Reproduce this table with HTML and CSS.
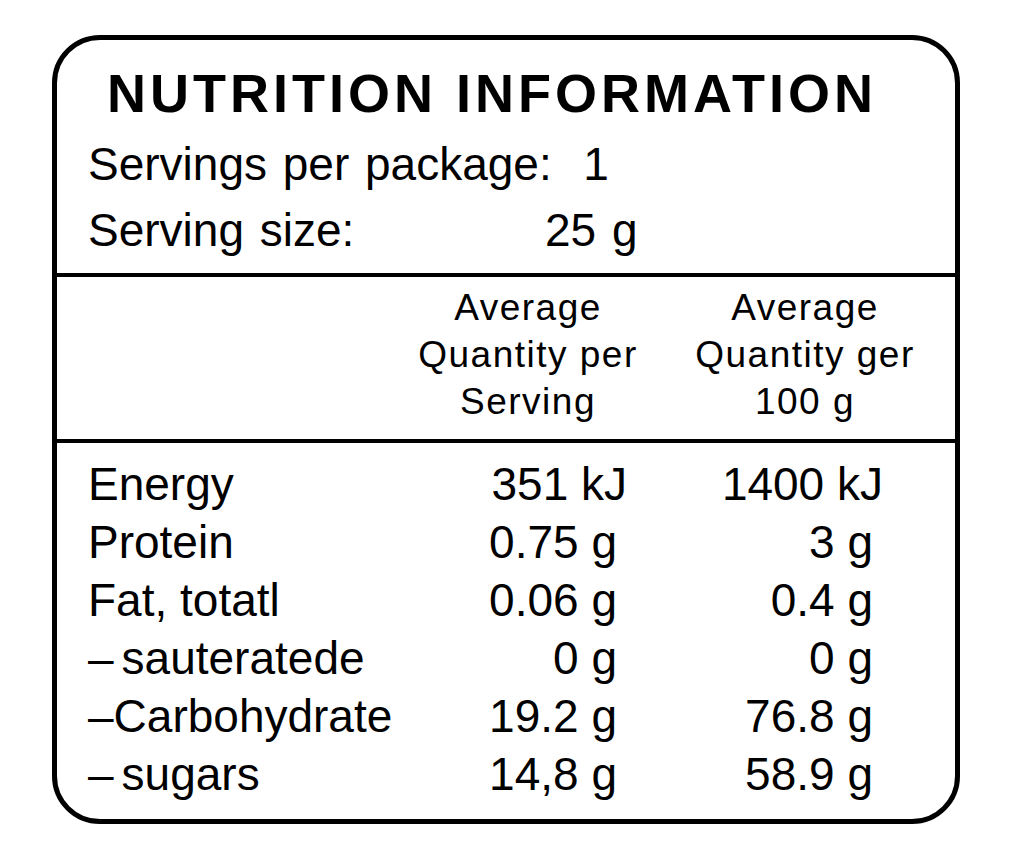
FILE: index.html
```html
<!DOCTYPE html>
<html lang="en">
<head>
<meta charset="utf-8">
<title>Nutrition Information</title>
<link rel="stylesheet" href="styles.css">
</head>
<body>
<div class="panel">
  <section class="intro">
    <h1 class="title">NUTRITION INFORMATION</h1>
    <div class="line">Servings per package:&nbsp; 1</div>
    <div class="line"><span class="size-label">Serving size:</span>25 g</div>
  </section>
  <section class="head">
    <div class="head-empty"></div>
    <div class="head-cell">Average<br>Quantity per<br>Serving</div>
    <div class="head-cell">Average<br>Quantity ger<br>100 g</div>
  </section>
  <section class="body">
    <div class="row"><span class="name">Energy</span><span class="val">351 kJ</span><span class="val">1400 kJ</span></div>
    <div class="row"><span class="name">Protein</span><span class="val g">0.75 g</span><span class="val g">3 g</span></div>
    <div class="row"><span class="name">Fat, totatl</span><span class="val g">0.06 g</span><span class="val g">0.4 g</span></div>
    <div class="row"><span class="name"><span class="dash">&ndash;</span>sauteratede</span><span class="val g">0 g</span><span class="val g">0 g</span></div>
    <div class="row"><span class="name"><span class="dash tight">&ndash;</span>Carbohydrate</span><span class="val g">19.2 g</span><span class="val g">76.8 g</span></div>
    <div class="row"><span class="name"><span class="dash">&ndash;</span>sugars</span><span class="val g">14,8 g</span><span class="val g">58.9 g</span></div>
  </section>
</div>
</body>
</html>
```
FILE: styles.css
```css
html, body {
  margin: 0;
  padding: 0;
  background: #ffffff;
}

body {
  font-family: "Liberation Sans", Arial, sans-serif;
  color: #000000;
}

.panel {
  box-sizing: border-box;
  width: 908px;
  height: 789px;
  margin: 35px 0 0 52px;
  border: 5px solid #000;
  border-radius: 48px;
  display: flex;
  flex-direction: column;
}

.intro {
  padding: 23px 0 10px 31px;
  border-bottom: 4px solid #000;
}

.title {
  margin: 0 0 8px 19px;
  font-size: 54px;
  line-height: 60px;
  font-weight: 700;
  letter-spacing: 4px;
}

.line {
  font-size: 46px;
  line-height: 66px;
  word-spacing: 3px;
}

.size-label {
  display: inline-block;
  width: 457px;
}

.head {
  display: grid;
  grid-template-columns: 1fr 240px 240px;
  column-gap: 37px;
  padding: 7px 30px 14px 31px;
  border-bottom: 4px solid #000;
}

.head-cell {
  text-align: center;
  font-size: 37px;
  line-height: 47px;
  letter-spacing: 1.5px;
}

.body {
  padding: 12px 72px 0 31px;
}

.row {
  display: grid;
  grid-template-columns: 1fr 200px 256px;
  font-size: 46px;
  line-height: 58px;
}

.dash {
  margin-right: 8px;
}

.dash.tight {
  margin-right: 0;
}

.val {
  text-align: right;
}

.val.g {
  padding-right: 10px;
}
```
